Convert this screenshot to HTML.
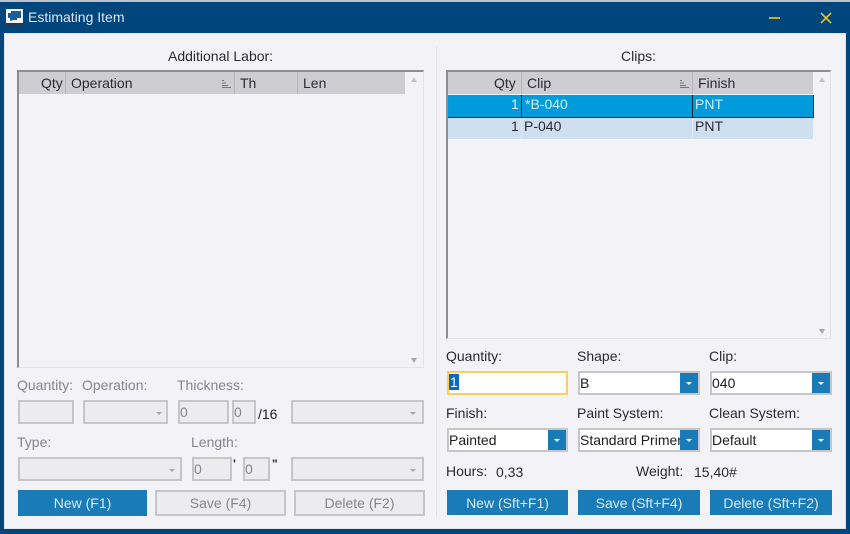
<!DOCTYPE html>
<html><head><meta charset="utf-8"><style>
html,body{margin:0;padding:0;width:850px;height:534px;overflow:hidden;background:#00457c}
body{position:relative;font-family:"Liberation Sans",sans-serif;font-size:14px;color:#2a2a35}
#w{position:absolute;left:0;top:0;width:850px;height:534px;filter:blur(0.35px);background:#00457c}
div,span{position:absolute;box-sizing:border-box;white-space:nowrap}
.t{line-height:18px;height:18px}
.g{color:#85858d}
.hd{background:#cdcdd2;top:72px;height:22px}
.hc{line-height:23px;height:22px;top:72px;color:#2a2a35}
.sep{top:72px;width:1px;height:22px;background:#b4b4ba}
.dis{background:#ececef;border:2px solid #c6c6c8;height:24px}
.in{background:#fff;border:2px solid #c6c6c8;height:24px;line-height:20px;padding-left:0;color:#1c1c24;overflow:hidden}
.ar{position:absolute;right:0;top:0;width:18px;height:20px;background:#197cb9}
.ar:after{content:"";position:absolute;left:6px;top:9px;border-left:3px solid transparent;border-right:3px solid transparent;border-top:3px solid #fff}
.da{position:absolute;border-left:3px solid transparent;border-right:3px solid transparent;border-top:3px solid #a8a8ac;width:0;height:0}
.btn{height:25px;line-height:24px;text-align:center;top:490px;background:#197cb9;color:#dbe8f2;border:1px solid #197cb9}
.btd{background:#ececef;border:2px solid #c6c6c8;color:#85858d;line-height:22px;height:26px}
.v{color:#85858d;line-height:20px;padding-left:0}
</style></head><body><div id="w">
<div style="left:0;top:0;width:850px;height:2px;background:#b9c4cf"></div>
<div style="left:4px;top:33px;width:842px;height:496px;background:#f2f2f7;border:1px solid #dfe3ea"></div>
<svg style="position:absolute;left:6px;top:9px" width="18" height="16" viewBox="0 0 18 16"><rect x="0" y="0" width="17" height="14" fill="#f2f5f8"/><rect x="0" y="14" width="17" height="2" fill="#30363f"/><path d="M2 4h3V2h10v7h-4v2H7l-3 1V9H2z" fill="#1d5f94"/></svg>
<div class="t" style="left:28px;top:8px;color:#dbe6f0;font-size:14px">Estimating Item</div>
<div style="left:769px;top:17px;width:11px;height:1.5px;background:#c9a92c"></div>
<svg style="position:absolute;left:820px;top:12px" width="12" height="12" viewBox="0 0 12 12"><path d="M1 1l10 10M11 1L1 11" stroke="#e3bd2a" stroke-width="1.6" fill="none"/></svg>
<div style="left:436px;top:46px;width:1px;height:471px;background:#e2e2e7"></div>

<div class="t" style="left:168px;top:47px">Additional Labor:</div>
<div class="t" style="left:621px;top:47px">Clips:</div>

<!-- Left grid -->
<div style="left:17px;top:70px;width:407px;height:298px;border:1px solid #e3e3e8;border-top:2px solid #8d8d92;border-left:2px solid #8d8d92"></div>
<div class="hd" style="left:19px;width:386px"></div>
<div class="hc" style="left:41px">Qty</div>
<div class="sep" style="left:65px"></div>
<div class="hc" style="left:71px">Operation</div>
<div class="sep" style="left:234px"></div>
<div class="hc" style="left:240px">Th</div>
<div class="sep" style="left:297px"></div>
<div class="hc" style="left:303px">Len</div>
<svg style="position:absolute;left:222px;top:80px" width="9" height="8"><path d="M0 .5h2M0 3h4M0 5.5h6M0 7.5h9" stroke="#74747c" fill="none"/></svg>
<svg style="position:absolute;left:410px;top:77px" width="8" height="6"><path d="M4 0l3 5H1z" fill="#c4c4c8"/></svg>
<svg style="position:absolute;left:410px;top:358px" width="8" height="6"><path d="M4 5L1 0h6z" fill="#a8a8ac"/></svg>

<!-- Right grid -->
<div style="left:446px;top:70px;width:385px;height:269px;border:1px solid #e3e3e8;border-top:2px solid #8d8d92;border-left:2px solid #8d8d92"></div>
<div class="hd" style="left:448px;width:365px"></div>
<div class="hc" style="left:494px">Qty</div>
<div class="sep" style="left:521px"></div>
<div class="hc" style="left:527px">Clip</div>
<div class="sep" style="left:692px"></div>
<div class="hc" style="left:698px">Finish</div>
<svg style="position:absolute;left:680px;top:80px" width="9" height="8"><path d="M0 .5h2M0 3h4M0 5.5h6M0 7.5h9" stroke="#74747c" fill="none"/></svg>
<svg style="position:absolute;left:818px;top:77px" width="8" height="6"><path d="M4 0l3 5H1z" fill="#c4c4c8"/></svg>
<svg style="position:absolute;left:818px;top:329px" width="8" height="6"><path d="M4 5L1 0h6z" fill="#a8a8ac"/></svg>
<div style="left:448px;top:95px;width:366px;height:23px;background:#009bdb;border:1px solid #0c2a3c;border-left:0;border-top:0"></div>
<div style="left:521px;top:95px;width:172px;height:23px;border:1px solid #0c2a3c;border-top:0;border-bottom:0"></div>
<div style="left:448px;top:118px;width:365px;height:21px;background:#cee0ef"></div>
<div style="left:521px;top:118px;width:1px;height:21px;background:#dce8f2"></div>
<div style="left:692px;top:118px;width:1px;height:21px;background:#dce8f2"></div>
<div class="t" style="left:511px;top:95px;color:#e4f2fa">1</div>
<div class="t" style="left:525px;top:95px;color:#d5ecf8">*B-040</div>
<div class="t" style="left:695px;top:95px;color:#d5ecf8">PNT</div>
<div class="t" style="left:511px;top:117px">1</div>
<div class="t" style="left:524px;top:117px">P-040</div>
<div class="t" style="left:695px;top:117px">PNT</div>

<!-- Left form -->
<div class="t g" style="left:17px;top:376px">Quantity:</div>
<div class="t g" style="left:82px;top:376px">Operation:</div>
<div class="t g" style="left:177px;top:376px">Thickness:</div>
<div class="dis" style="left:18px;top:400px;width:56px"></div>
<div class="dis" style="left:83px;top:400px;width:85px"><span class="da" style="left:71px;top:10px"></span></div>
<div class="dis v" style="left:178px;top:400px;width:51px">0</div>
<div class="dis v" style="left:232px;top:400px;width:24px">0</div>
<div class="t" style="left:258px;top:405px;color:#1c1c24">/16</div>
<div class="dis" style="left:291px;top:400px;width:133px"><span class="da" style="left:117px;top:10px"></span></div>
<div class="t g" style="left:17px;top:433px">Type:</div>
<div class="t g" style="left:191px;top:433px">Length:</div>
<div class="dis" style="left:18px;top:457px;width:164px"><span class="da" style="left:149px;top:10px"></span></div>
<div class="dis v" style="left:192px;top:457px;width:40px">0</div>
<div class="t" style="left:233px;top:455px;font-size:12px;font-weight:bold">'</div>
<div class="dis v" style="left:243px;top:457px;width:27px">0</div>
<div class="t" style="left:272px;top:455px;font-size:12px;font-weight:bold">"</div>
<div class="dis" style="left:291px;top:457px;width:133px"><span class="da" style="left:117px;top:10px"></span></div>
<div class="btn" style="left:18px;width:129px;height:26px">New (F1)</div>
<div class="btn btd" style="left:155px;width:131px">Save (F4)</div>
<div class="btn btd" style="left:294px;width:131px">Delete (F2)</div>

<!-- Right form -->
<div class="t" style="left:446px;top:347px">Quantity:</div>
<div class="t" style="left:577px;top:347px">Shape:</div>
<div class="t" style="left:709px;top:347px">Clip:</div>
<div class="in" style="left:447px;top:371px;width:121px;border-color:#fbcf5f"><span style="position:relative;background:#0a66cc;color:#fff;display:inline-block;line-height:16px;padding:0 1px;vertical-align:1px">1</span></div>
<div class="in" style="left:578px;top:371px;width:122px">B<span class="ar"></span></div>
<div class="in" style="left:710px;top:371px;width:122px">040<span class="ar"></span></div>
<div class="t" style="left:446px;top:404px">Finish:</div>
<div class="t" style="left:577px;top:404px">Paint System:</div>
<div class="t" style="left:709px;top:404px">Clean System:</div>
<div class="in" style="left:447px;top:428px;width:121px">Painted<span class="ar"></span></div>
<div class="in" style="left:578px;top:428px;width:122px">Standard Primer<span class="ar"></span></div>
<div class="in" style="left:710px;top:428px;width:122px">Default<span class="ar"></span></div>
<div class="t" style="left:446px;top:462px">Hours:</div>
<div class="t" style="left:496px;top:463px">0,33</div>
<div class="t" style="left:636px;top:462px">Weight:</div>
<div class="t" style="left:694px;top:463px">15,40#</div>
<div class="btn" style="left:447px;width:121px">New (Sft+F1)</div>
<div class="btn" style="left:578px;width:122px">Save (Sft+F4)</div>
<div class="btn" style="left:710px;width:122px">Delete (Sft+F2)</div>
</div></body></html>
